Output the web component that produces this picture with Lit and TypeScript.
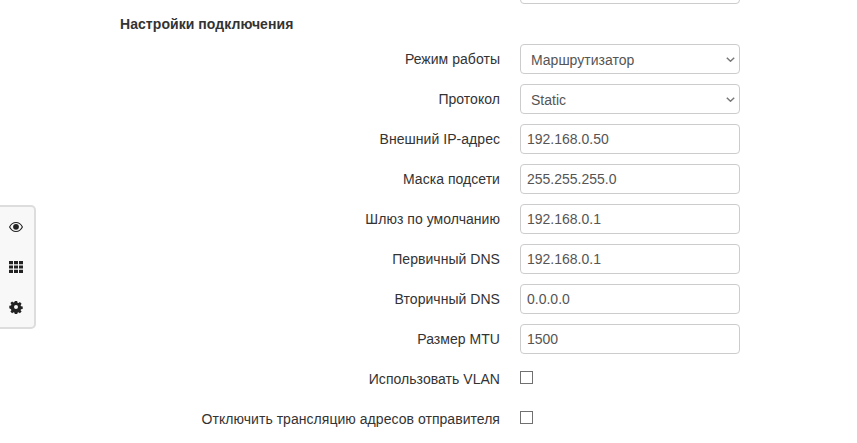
import { LitElement, html, css } from "lit";
import { customElement } from "lit/decorators.js";

const rows: { label: string; kind: string; value?: string; options?: string[] }[] = [
  { label: "Режим работы", kind: "select", options: ["Маршрутизатор"] },
  { label: "Протокол", kind: "select", options: ["Static"] },
  { label: "Внешний IP-адрес", kind: "input", value: "192.168.0.50" },
  { label: "Маска подсети", kind: "input", value: "255.255.255.0" },
  { label: "Шлюз по умолчанию", kind: "input", value: "192.168.0.1" },
  { label: "Первичный DNS", kind: "input", value: "192.168.0.1" },
  { label: "Вторичный DNS", kind: "input", value: "0.0.0.0" },
  { label: "Размер MTU", kind: "input", value: "1500" },
  { label: "Использовать VLAN", kind: "check" },
  { label: "Отключить трансляцию адресов отправителя", kind: "check" },
];

@customElement("app-root")
export class AppRoot extends LitElement {
  static styles = css`
    :host {
      display: block;
      position: relative;
      width: 857px;
      height: 443px;
      overflow: hidden;
      background: #fff;
      font-family: "Liberation Sans", Arial, sans-serif;
      font-size: 14px;
      line-height: 20px;
      color: #333;
    }
    .form {
      display: flex;
      flex-direction: column;
      gap: 10px;
      margin-top: -26px;
    }
    .row {
      display: grid;
      grid-template-columns: 500px 220px;
      column-gap: 20px;
      align-items: center;
      height: 30px;
    }
    .label {
      text-align: right;
      white-space: nowrap;
      letter-spacing: 0.04px;
      font-weight: 400;
    }
    .control {
      box-sizing: border-box;
      width: 220px;
      height: 30px;
      margin: 0;
      padding: 5px 6px;
      border: 1px solid #ccc;
      border-radius: 4px;
      background: #fff;
      color: #555;
      font: inherit;
      outline: none;
    }
    select.control {
      appearance: none;
      -webkit-appearance: none;
      padding: 5px 24px 5px 10px;
    }
    .select-wrap {
      position: relative;
      display: block;
      width: 220px;
      height: 30px;
    }
    .chevron {
      position: absolute;
      right: 5px;
      top: 13px;
      width: 9px;
      height: 5px;
      fill: none;
      stroke: #777;
      stroke-width: 1.5;
      pointer-events: none;
    }
    .check {
      appearance: none;
      -webkit-appearance: none;
      box-sizing: border-box;
      width: 13px;
      height: 13px;
      margin: 0 0 3px;
      justify-self: start;
      background: #fff;
      border: 1px solid #707070;
      border-radius: 0;
    }
    .heading {
      height: 20px;
      margin-left: 120px;
      font-weight: 700;
      font-size: 14px;
      line-height: 20px;
      letter-spacing: 0.06px;
    }
    .side {
      position: absolute;
      left: 0;
      top: 205px;
      box-sizing: border-box;
      width: 36px;
      height: 124px;
      display: flex;
      flex-direction: column;
      align-items: center;
      justify-content: center;
      gap: 26px;
      padding-right: 3px;
      background: #f8f8f8;
      border: 2px solid #ddd;
      border-left: 0;
      border-radius: 0 5px 5px 0;
      color: #222;
    }
    .side svg {
      display: block;
      width: 14px;
      height: 14px;
      fill: currentColor;
    }
    .lens {
      fill: none;
      stroke: currentColor;
      stroke-width: 1.1;
    }
  `;

  render() {
    return html`
      <div class="form">
        <div class="row"><span></span><input class="control" /></div>
        <div class="heading">Настройки подключения</div>
        ${rows.map(
          (r) => html`<div class="row">
            <span class="label">${r.label}</span>
            ${r.kind === "select"
              ? html`<span class="select-wrap"
                  ><select class="control">${r.options!.map((o) => html`<option>${o}</option>`)}</select
                  ><svg class="chevron" viewBox="0 0 9 5"><path d="M.8.8l3.700 3.400L8.200.8" /></svg
                ></span>`
              : r.kind === "input"
              ? html`<input class="control" .value=${r.value!} />`
              : html`<input class="check" type="checkbox" />`}
          </div>`
        )}
      </div>
      <div class="side">
        <svg viewBox="0 0 14 14">
          <path class="lens" d="M.6 7C2.100 4 4.400 2.500 7 2.500s4.900 1.500 6.400 4.500c-1.500 3-3.800 4.500-6.400 4.500S2.100 10 .6 7z" />
          <circle cx="7" cy="6.800" r="2.900" />
        </svg>
        <svg viewBox="0 0 14 14"><path d="M0 1h4v3.200H0zM5 1h4v3.200H5zM10 1h4v3.200h-4zM0 5.400h4v3.200H0zM5 5.400h4v3.200H5zM10 5.400h4v3.200h-4zM0 9.800h4V13H0zM5 9.800h4V13H5zM10 9.800h4V13h-4z"/></svg>
        <svg viewBox="0 0 14 14"><path fill-rule="evenodd" d="M5.800 1h2.400l.3 1.700 1 .4 1.400-1 1.700 1.700-1 1.400.4 1 1.700.3v2.400l-1.700.3-.4 1 1 1.400-1.700 1.700-1.400-1-1 .4-.3 1.700H5.800l-.3-1.700-1-.4-1.400 1-1.700-1.700 1-1.400-.4-1L.3 8.200V5.800l1.700-.3.4-1-1-1.400 1.700-1.700 1.400 1 1-.4zM7 5a2 2 0 1 0 0 4 2 2 0 0 0 0-4z"/></svg>
      </div>
    `;
  }
}
